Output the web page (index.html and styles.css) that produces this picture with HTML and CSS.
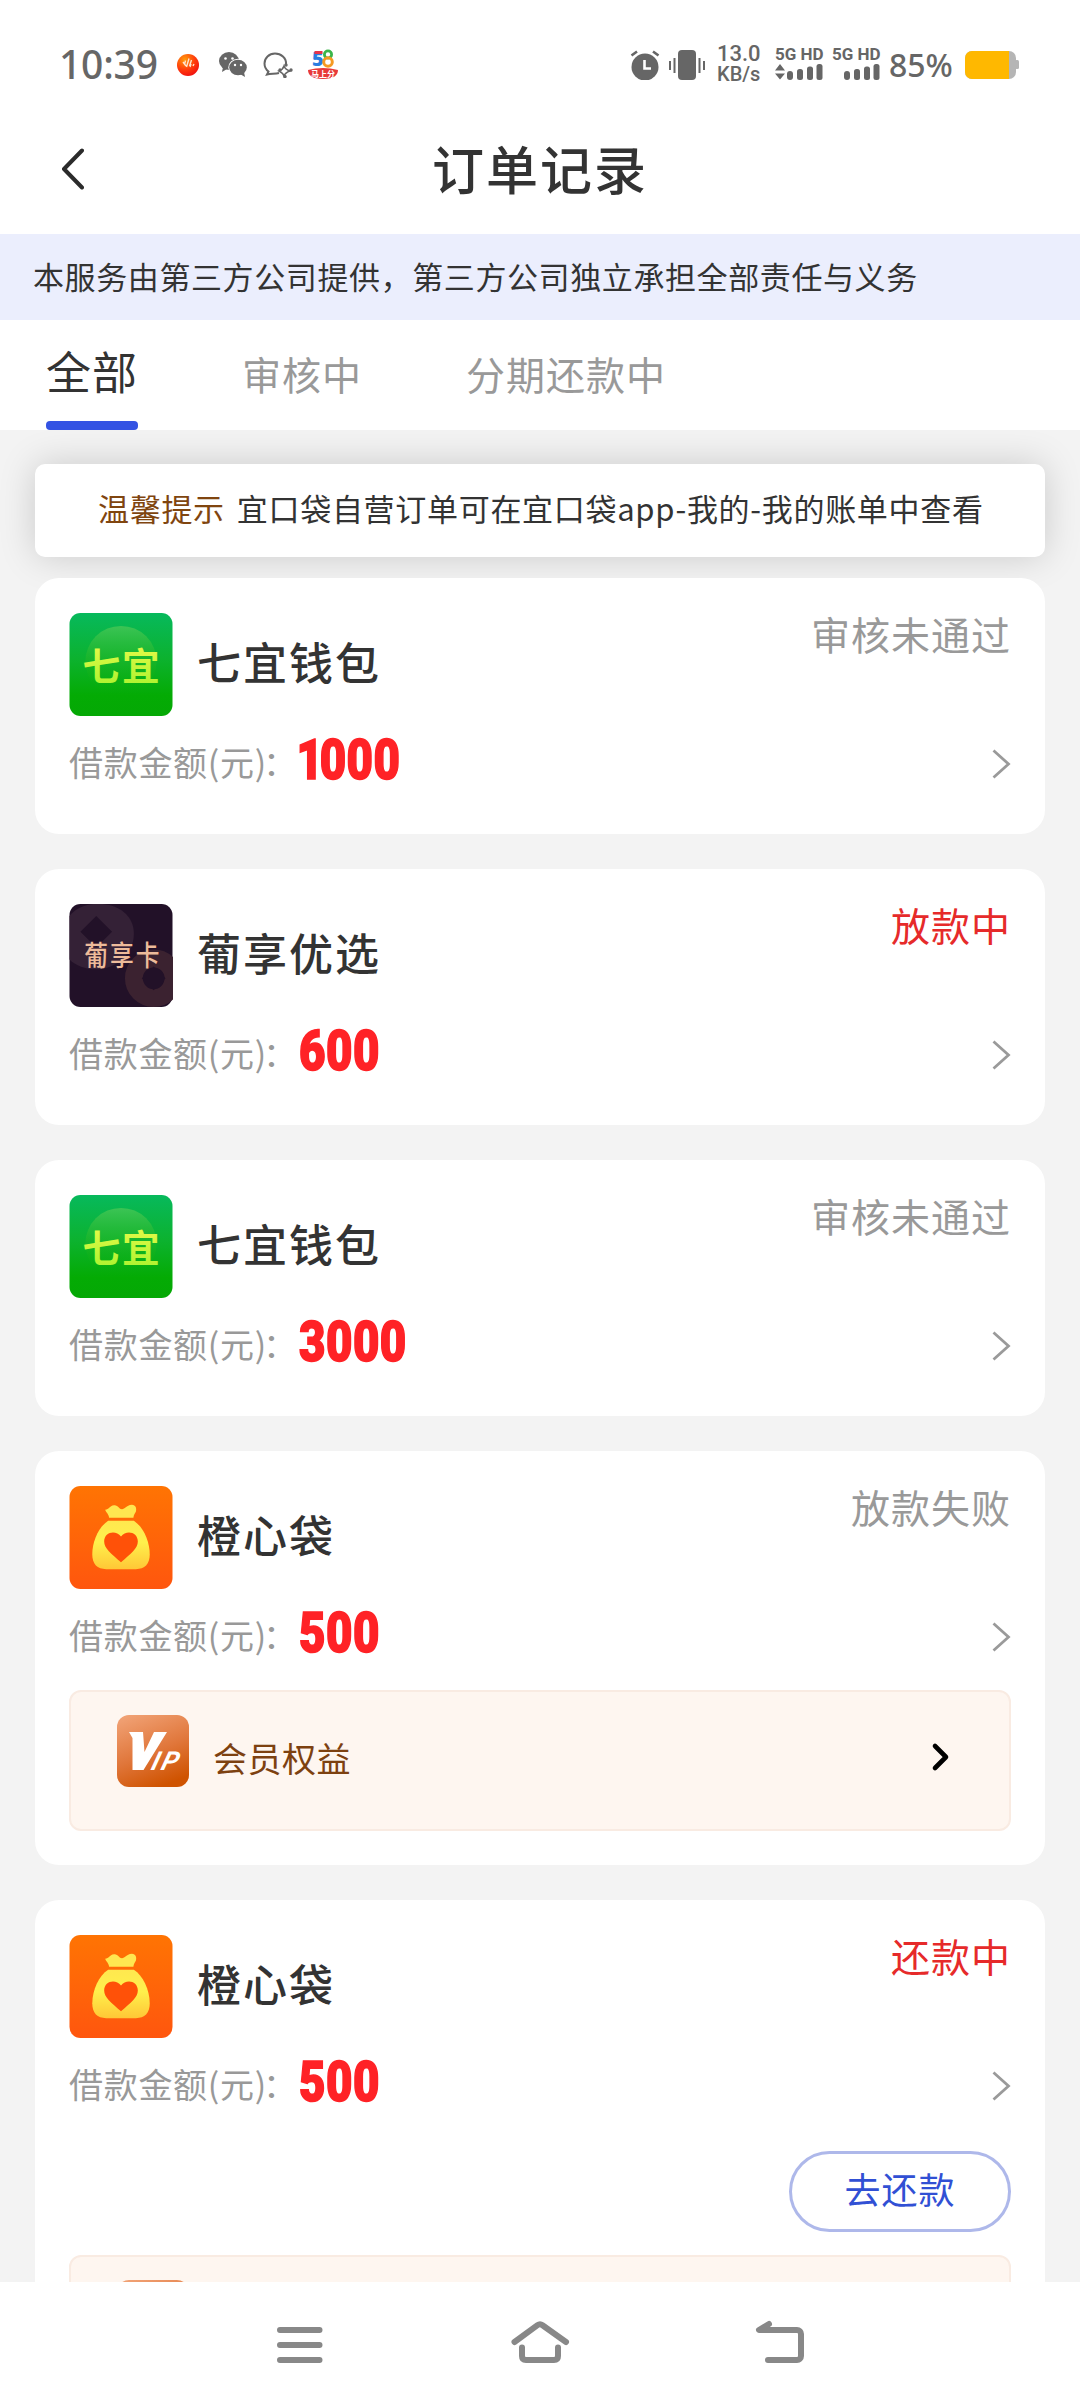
FILE: index.html
```html
<!DOCTYPE html>
<html lang="zh-CN">
<head>
<meta charset="utf-8">
<title>订单记录</title>
<link rel="stylesheet" href="styles.css">
</head>
<body>
<svg class="defs" aria-hidden="true">
  <defs>
    <linearGradient id="gGreen" x1="0" y1="0" x2="0" y2="1"><stop offset="0" stop-color="#07b95c"/><stop offset=".45" stop-color="#0cb22e"/><stop offset=".8" stop-color="#04ab04"/><stop offset="1" stop-color="#05a805"/></linearGradient>
    <linearGradient id="gDisc" x1="0" y1="0" x2="0" y2="1"><stop offset="0" stop-color="#3cc455"/><stop offset=".6" stop-color="#1cb41c" stop-opacity=".4"/><stop offset="1" stop-color="#04ab04" stop-opacity="0"/></linearGradient>
    <linearGradient id="gLime" x1="0" y1="0" x2="0" y2="1"><stop offset="0" stop-color="#f2fb4e"/><stop offset="1" stop-color="#a4f22c"/></linearGradient>
    <linearGradient id="gOrange" x1="0" y1="0" x2="0" y2="1"><stop offset="0" stop-color="#ff7403"/><stop offset="1" stop-color="#ff560e"/></linearGradient>
    <linearGradient id="gBag" x1="0" y1="0" x2="0" y2="1"><stop offset="0" stop-color="#ffe84f"/><stop offset=".45" stop-color="#fff04c"/><stop offset="1" stop-color="#ffc736"/></linearGradient>
    <linearGradient id="gVip" x1=".2" y1="0" x2=".6" y2="1"><stop offset="0" stop-color="#f0a073"/><stop offset=".55" stop-color="#e0763a"/><stop offset="1" stop-color="#cf5300"/></linearGradient>
    <radialGradient id="gBall" cx=".35" cy=".25" r=".8"><stop offset="0" stop-color="#ff9a0a"/><stop offset=".6" stop-color="#ff3a0c"/><stop offset="1" stop-color="#f01010"/></radialGradient>
    <symbol id="logoQiyi" viewBox="0 0 104 104">
      <rect width="104" height="104" rx="11" fill="url(#gGreen)"/>
      <circle cx="52" cy="49" r="36" fill="url(#gDisc)"/>
      <text x="13 53" y="68" font-size="38" font-weight="700" fill="url(#gLime)">七宜</text>
    </symbol>
    <symbol id="logoPu" viewBox="0 0 104 104">
      <rect width="104" height="104" rx="11" fill="#221128"/>
      <path d="M0 12C10 0 26-2 40 1c16 4 25 15 25 29 0 20-18 36-38 36C16 66 6 62 0 56z" fill="#342136"/>
      <circle cx="85" cy="75" r="20" fill="none" stroke="#3b2230" stroke-width="18"/>
      <path d="M27 12l16 16-16 16-16-16zM85 63l12 12-12 12-12-12z" fill="#221128"/>
      <text transform="translate(0 63) scale(1 1.18)" x="15 41 67" y="0" font-size="24" font-weight="500" fill="#edbb9a">葡享卡</text>
    </symbol>
    <symbol id="logoBag" viewBox="0 0 104 104">
      <rect width="104" height="104" rx="11" fill="url(#gOrange)"/>
      <path d="M40 32c-.5-4-3-5-4-8 4 0 4-4 9-4.500 4-.5 5 4 8 4s4-4 10-4.500c4 0 5 4 4 7-1 2-2 3-2.500 6z" fill="#ffe750"/>
      <path d="M39 35h26c9 6 16 20 16 34 0 10-5 15-14 15H37c-9 0-14-5-14-15 0-14 7-28 16-34z" fill="url(#gBag)"/>
      <path d="M52 77C42 68 35 63 35 56c0-10 12-12 17-5 5-7 17-5 17 5 0 7-7 12-17 21z" fill="#ff5108"/>
    </symbol>
    <symbol id="vip" viewBox="0 0 72 72">
      <rect width="72" height="72" rx="12" fill="url(#gVip)"/>
      <path d="M12 17h14l1.500 20L37 17h13L26.500 55H15.500V23z" fill="#fff"/>
      <text transform="translate(0 55) skewX(-16)" x="33 43" y="0" font-size="26" font-weight="700" font-style="italic" class="vip-text" fill="#fff">IP</text>
    </symbol>
    <symbol id="chev" viewBox="0 0 20 32"><path d="M2.500 2.500L17.500 16 2.500 29.500" fill="none" stroke="#9a9a9a" stroke-width="2.800"/></symbol>
    <symbol id="chevBold" viewBox="0 0 20 32"><path d="M4 5l11 11L4 27" fill="none" stroke="#000" stroke-width="4.600" stroke-linecap="round" stroke-linejoin="round"/></symbol>
  </defs>
</svg>

<div class="screen">
  <header class="statusbar">
    <span class="clock">10:39</span>
    <svg class="app-ball" viewBox="0 0 22 22"><circle cx="11" cy="11" r="11" fill="url(#gBall)"/><path d="M6 8l3 4M8.500 6.500l-1 4M12 4.500L9.500 13M14.500 6l-2 6M14 10l-1 3M17 10l-1 2" stroke="#ffe3cf" stroke-width="1.400" fill="none"/></svg>
    <svg class="app-wechat" viewBox="0 0 28 25"><g fill="#666"><ellipse cx="10" cy="9" rx="10" ry="9"/><path d="M4 15l-1 5 5-3z"/></g><ellipse cx="19" cy="15.500" rx="9.700" ry="8.700" fill="#fff"/><ellipse cx="19" cy="15.500" rx="8.800" ry="7.800" fill="#666"/><path d="M21 22l5 3-1-5z" fill="#666"/><g fill="#fff"><circle cx="6.500" cy="6.500" r="1.300"/><circle cx="13.500" cy="6.500" r="1.300"/><circle cx="16" cy="13" r="1.200"/><circle cx="22" cy="13" r="1.200"/></g></svg>
    <svg class="app-bubble" viewBox="0 0 30 26"><g fill="none" stroke="#666" stroke-width="2"><path d="M23 12C23.500 6 18 1.500 12 1.500 6 1.500 1.500 6 1.500 11.500c0 4 2 6.500 4 8L4 22.500c4-1 8-.5 12-1.500"/><path d="M21 14c1 3 3 4 6 5-3 1-5 2-6 5-1-3-3-4-5-5 3-1 4-2 5-5z" stroke-width="1.500"/></g><g fill="#666"><circle cx="23" cy="13" r="1.700"/><circle cx="28" cy="18" r="1.700"/><circle cx="22" cy="24.500" r="1.700"/><circle cx="17" cy="18" r="1.700"/></g></svg>
    <svg class="app-58" viewBox="0 0 32 29"><path d="M1 20q15-4 30 0c0 5-4 9-15 9S1 25 1 20z" fill="#e83a3a"/><text class="digits" x="5" y="16" font-size="20" font-weight="800" fill="#2a7de0">5</text><path d="M7.500 2.500h8" stroke="#e8334a" stroke-width="3"/><circle cx="21" cy="4.500" r="3.600" fill="none" stroke="#3bb54a" stroke-width="2.800"/><circle cx="21" cy="12" r="4.300" fill="none" stroke="#f59a23" stroke-width="3"/><text x="4" y="26.500" font-size="8" font-weight="700" fill="#fff">马上分</text></svg>
    <span class="spacer"></span>
    <svg class="alarm" viewBox="0 0 30 30"><circle cx="15" cy="17" r="13.500" fill="#666"/><path d="M1.500 5.500L7 1.500M28.500 5.500L23 1.500" stroke="#666" stroke-width="2.600" fill="none"/><path d="M14.500 10v8.500H21" stroke="#fff" stroke-width="2.600" fill="none"/></svg>
    <svg class="vibrate" viewBox="0 0 36 30"><rect x="9" width="18" height="30" rx="4" fill="#666"/><path d="M1 11v9M5.500 8v15M30.500 8v15M35 11v9" stroke="#666" stroke-width="2"/></svg>
    <span class="speed"><span>13.0</span><span>KB/s</span></span>
    <span class="sim"><span>5G HD</span><svg viewBox="0 0 48 16"><g fill="#666"><path d="M5 0l5 6.500H0zM5 15.500l5-6H0z"/><rect x="12" y="7" width="6" height="9" rx="3"/><rect x="22" y="5" width="6" height="11" rx="2.500"/><rect x="32" y="2.500" width="6" height="13.500" rx="2.500"/><rect x="41.500" width="6" height="16" rx="2.500"/></g></svg></span>
    <span class="sim second"><span>5G HD</span><svg viewBox="0 0 48 16"><g fill="#666"><rect x="12" y="7" width="6" height="9" rx="3"/><rect x="22" y="5" width="6" height="11" rx="2.500"/><rect x="32" y="2.500" width="6" height="13.500" rx="2.500"/><rect x="41.500" width="6" height="16" rx="2.500"/></g></svg></span>
    <span class="percent">85%</span>
    <svg class="battery" viewBox="0 0 54 28"><rect width="51" height="28" rx="7" fill="#b5b5b5"/><rect x="50" y="9" width="4" height="9" rx="1.500" fill="#b5b5b5"/><path d="M7 0h37v28H7a7 7 0 0 1-7-7V7a7 7 0 0 1 7-7z" fill="#ffb800"/></svg>
  </header>

  <div class="titlebar">
    <svg class="back" viewBox="0 0 24 42"><path d="M22 2.500L4 21l18 18.500" fill="none" stroke="#2b2b2b" stroke-width="4" stroke-linecap="round" stroke-linejoin="round"/></svg>
    <h1>订单记录</h1>
  </div>

  <div class="notice">本服务由第三方公司提供，第三方公司独立承担全部责任与义务</div>

  <nav class="tabs">
    <a class="tab active">全部</a>
    <a class="tab">审核中</a>
    <a class="tab">分期还款中</a>
  </nav>

  <main class="list">
    <div class="tip"><b>温馨提示</b><span>宜口袋自营订单可在宜口袋app-我的-我的账单中查看</span></div>

    <section class="card">
      <div class="head"><svg class="logo"><use href="#logoQiyi"/></svg><h2>七宜钱包</h2><span class="state">审核未通过</span></div>
      <div class="sum"><span class="label">借款金额(元)<i>：</i></span><span class="amount"><i>1</i>000</span><svg class="chev"><use href="#chev"/></svg></div>
    </section>

    <section class="card">
      <div class="head"><svg class="logo"><use href="#logoPu"/></svg><h2>葡享优选</h2><span class="state red">放款中</span></div>
      <div class="sum"><span class="label">借款金额(元)<i>：</i></span><span class="amount">600</span><svg class="chev"><use href="#chev"/></svg></div>
    </section>

    <section class="card">
      <div class="head"><svg class="logo"><use href="#logoQiyi"/></svg><h2>七宜钱包</h2><span class="state">审核未通过</span></div>
      <div class="sum"><span class="label">借款金额(元)<i>：</i></span><span class="amount">3000</span><svg class="chev"><use href="#chev"/></svg></div>
    </section>

    <section class="card">
      <div class="head"><svg class="logo"><use href="#logoBag"/></svg><h2>橙心袋</h2><span class="state">放款失败</span></div>
      <div class="sum"><span class="label">借款金额(元)<i>：</i></span><span class="amount">500</span><svg class="chev"><use href="#chev"/></svg></div>
      <div class="benefit"><svg class="vip"><use href="#vip"/></svg><span>会员权益</span><svg class="chev-bold"><use href="#chevBold"/></svg></div>
    </section>

    <section class="card">
      <div class="head"><svg class="logo"><use href="#logoBag"/></svg><h2>橙心袋</h2><span class="state red">还款中</span></div>
      <div class="sum"><span class="label">借款金额(元)<i>：</i></span><span class="amount">500</span><svg class="chev"><use href="#chev"/></svg></div>
      <div class="actions"><button class="repay">去还款</button></div>
      <div class="benefit"><svg class="vip"><use href="#vip"/></svg></div>
    </section>
  </main>

  <footer class="navbar">
    <svg viewBox="0 0 60 60"><path d="M10 18h39.500M10 33h39.500M10 48h39.500" stroke="#888" stroke-width="6" stroke-linecap="round"/></svg>
    <svg viewBox="0 0 60 60"><path d="M4.500 30L27.500 13.200q2.500-1.800 5 0L56 30M12 35.500v8.500q0 4 4 4h28q4 0 4-4V35.500" fill="none" stroke="#888" stroke-width="6" stroke-linecap="round" stroke-linejoin="round"/></svg>
    <svg viewBox="0 0 60 60"><path d="M19 12L9 18h38a4 4 0 0 1 4 4v22a4 4 0 0 1-4 4H18" fill="none" stroke="#888" stroke-width="6" stroke-linecap="round" stroke-linejoin="round"/></svg>
  </footer>
</div>
</body>
</html>
```

FILE: styles.css
```css
* { box-sizing: border-box; }
body {
  margin: 0;
  background: #fff;
  color: #333;
  font-family: "Noto Sans CJK SC", sans-serif;
}
h1, h2 { margin: 0; font-weight: 500; }
i { font-style: normal; }
svg { display: block; flex: none; }
.defs { position: absolute; width: 0; height: 0; }
.screen {
  width: 1080px;
  height: 2408px;
  display: flex;
  flex-direction: column;
  overflow: hidden;
}

/* system status bar */
.statusbar {
  flex: none;
  height: 129px;
  padding: 0 61px 0 59px;
  display: flex;
  align-items: center;
  color: #666;
  font-family: "Noto Sans", sans-serif;
  white-space: nowrap;
}
.clock { width: 100px; height: 52px; font-size: 39px; font-weight: 500; line-height: 50px; letter-spacing: -.2px; }
.app-ball { width: 22px; height: 22px; margin-left: 18px; }
.app-wechat { width: 28px; height: 25px; margin-left: 20px; }
.app-bubble { width: 30px; height: 26px; margin-left: 16px; }
.app-58 { width: 32px; height: 29px; margin-left: 14px; overflow: visible; font-family: "Noto Sans CJK SC", sans-serif; }
.digits { font-family: "Open Sans", sans-serif; }
.spacer { flex: 1; }
.alarm { width: 30px; height: 30px; }
.vibrate { width: 36px; height: 30px; margin-left: 9px; }
.speed {
  width: 46px;
  height: 42px;
  margin-left: 12px;
  display: flex;
  flex-direction: column;
  font-family: Roboto, sans-serif;
  font-size: 22px;
  font-weight: 500;
  line-height: 20px;
}
.speed span:last-child { font-size: 20px; }
.sim {
  width: 48px;
  height: 35px;
  margin-left: 12px;
  display: flex;
  flex-direction: column;
  gap: 2px;
  font-family: Roboto, sans-serif;
  font-size: 17px;
  font-weight: 700;
  line-height: 15px;
}
.sim svg { width: 48px; height: 16px; }
.sim.second { margin-left: 9px; }
.percent { width: 66px; margin-left: 9px; font-size: 32px; font-weight: 500; line-height: 40px; }
.battery { width: 54px; height: 28px; margin-left: 10px; }

/* page title */
.titlebar {
  flex: none;
  height: 105px;
  padding: 0 60px 25px;
  display: grid;
  grid-template-columns: 24px 1fr 24px;
  align-items: center;
}
.back { width: 24px; height: 42px; }
.titlebar h1 { height: 80px; text-align: center; font-size: 52px; letter-spacing: 2px; line-height: 78px; }

.notice {
  flex: none;
  height: 86px;
  padding-left: 33px;
  background: #ebeefd;
  font-size: 31px;
  letter-spacing: .6px;
  line-height: 83px;
}

.tabs {
  flex: none;
  height: 110px;
  padding-left: 46px;
  display: flex;
  gap: 104px;
}
.tab { height: 110px; color: #999; font-size: 39px; letter-spacing: 1px; line-height: 106px; }
.tab.active {
  display: flex;
  flex-direction: column;
  justify-content: space-between;
  color: #333;
  font-size: 45px;
  letter-spacing: 1px;
  line-height: 101px;
}
.tab.active::after {
  content: "";
  height: 9px;
  border-radius: 4px;
  background: #3453e3;
}

/* order list */
.list {
  flex: 1;
  min-height: 0;
  overflow: hidden;
  padding: 34px 35px 0;
  background: #f3f3f3;
}
.tip {
  height: 93px;
  margin-bottom: 21px;
  padding: 0 0 6px 63px;
  display: flex;
  align-items: center;
  gap: 12px;
  background: #fff;
  border-radius: 10px;
  box-shadow: 0 0 36px rgba(0, 0, 0, .17);
  font-size: 31px;
  letter-spacing: .7px;
  white-space: nowrap;
}
.tip b { color: #80450f; font-weight: 400; }
.card {
  position: relative;
  margin-bottom: 35px;
  padding: 35px 34px 34px;
  background: #fff;
  border-radius: 24px;
}
.head { height: 103px; display: flex; align-items: flex-start; }
.logo { width: 104px; height: 103px; }
.head h2 { margin-left: 24px; font-size: 44px; letter-spacing: 2px; line-height: 97px; }
.state { margin-left: auto; color: #999; font-size: 39px; letter-spacing: 1px; line-height: 41px; }
.red { color: #e62a2a; }
.sum { height: 84px; display: flex; align-items: center; padding-top: 10px; }
.label { width: 230px; height: 52px; color: #999; font-size: 34px; letter-spacing: .7px; line-height: 50px; white-space: nowrap; }
.label i { margin-left: -4px; }
.amount {
  height: 84px;
  color: #ff2226;
  font-family: Roboto, sans-serif;
  font-size: 55px;
  font-weight: 900;
  letter-spacing: .6px;
  line-height: 78px;
  transform: scaleX(.83);
  transform-origin: left;
  -webkit-text-stroke: 1.6px #ff2226;
}
.amount i { margin-left: -3px; letter-spacing: -4px; }
.chev { width: 20px; height: 32px; margin: 2px 0 0 auto; }
.benefit {
  height: 141px;
  margin-top: 17px;
  padding: 23px 58px 0 46px;
  display: flex;
  align-items: flex-start;
  background: #fef6f0;
  border: 2px solid #f9ebe2;
  border-radius: 12px;
  color: #7d4110;
  font-size: 34px;
  letter-spacing: .5px;
  line-height: 86px;
}
.vip { width: 72px; height: 72px; margin-right: 24px; }
.vip-text { font-family: Roboto, sans-serif; }
.chev-bold { width: 20px; height: 32px; margin: 26px 0 0 auto; }
.actions { display: flex; justify-content: flex-end; padding-top: 29px; }
.repay {
  width: 222px;
  height: 81px;
  padding: 0 0 7px;
  background: #fff;
  border: 3px solid #aeb8ea;
  border-radius: 41px;
  color: #3150d4;
  font: 400 36px "Noto Sans CJK SC", sans-serif;
  letter-spacing: 1px;
}
.actions + .benefit { margin-top: 23px; }

/* system navigation */
.navbar {
  flex: none;
  height: 126px;
  padding: 30px 270px 0;
  display: flex;
  justify-content: space-between;
}
.navbar svg { width: 60px; height: 60px; }
```
